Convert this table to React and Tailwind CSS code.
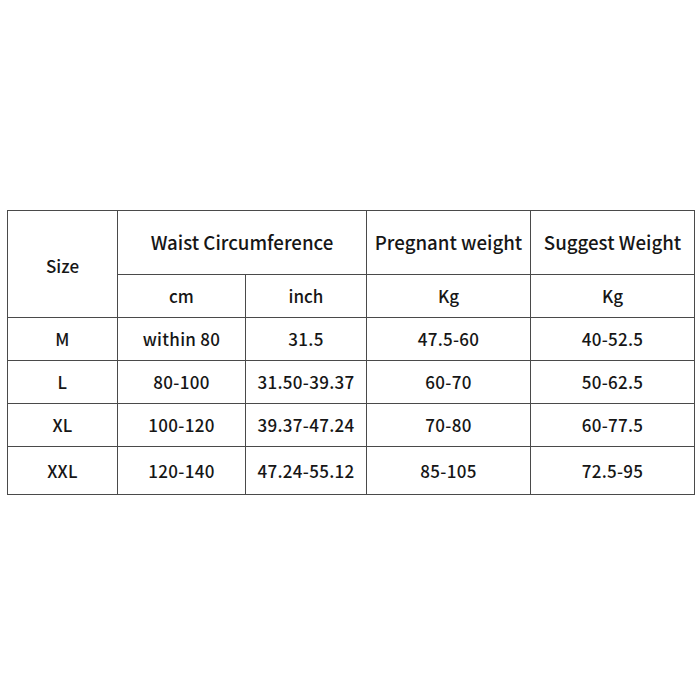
export default function App() {
  const rows = [
    ['M', 'within 80', '31.5', '47.5-60', '40-52.5'],
    ['L', '80-100', '31.50-39.37', '60-70', '50-62.5'],
    ['XL', '100-120', '39.37-47.24', '70-80', '60-77.5'],
    ['XXL', '120-140', '47.24-55.12', '85-105', '72.5-95'],
  ]
  const cell = 'border border-[#4a4a4a] text-center align-middle p-0'

  return (
    <div className="w-[700px] h-[700px] bg-white pt-[210px] pl-[7px] font-['Noto_Sans_CJK_SC','Noto_Sans',sans-serif] font-medium text-[17px] text-[#161616]">
      <table className="table-fixed border-collapse w-[687px]">
        <colgroup>
          <col className="w-[110px]" />
          <col className="w-[128px]" />
          <col className="w-[121px]" />
          <col className="w-[164px]" />
          <col className="w-[164px]" />
        </colgroup>
        <tbody>
          <tr className="h-[64px]">
            <td rowSpan={2} className={`${cell} pt-[4px]`}>Size</td>
            <td colSpan={2} className={`${cell} text-[18.7px] pb-[1px]`}>Waist Circumference</td>
            <td className={`${cell} text-[18.7px] pb-[1px]`}>Pregnant weight</td>
            <td className={`${cell} text-[18.7px] pb-[1px]`}>Suggest Weight</td>
          </tr>
          <tr className="h-[43px]">
            <td className={cell}>cm</td>
            <td className={cell}>inch</td>
            <td className={cell}>Kg</td>
            <td className={cell}>Kg</td>
          </tr>
          {rows.map((r, i) => (
            <tr key={r[0]} className={i === 3 ? 'h-[48px]' : 'h-[43px]'}>
              {r.map((v, j) => (
                <td key={j} className={`${cell} tracking-[0.3px]`}>{v}</td>
              ))}
            </tr>
          ))}
        </tbody>
      </table>
    </div>
  )
}
